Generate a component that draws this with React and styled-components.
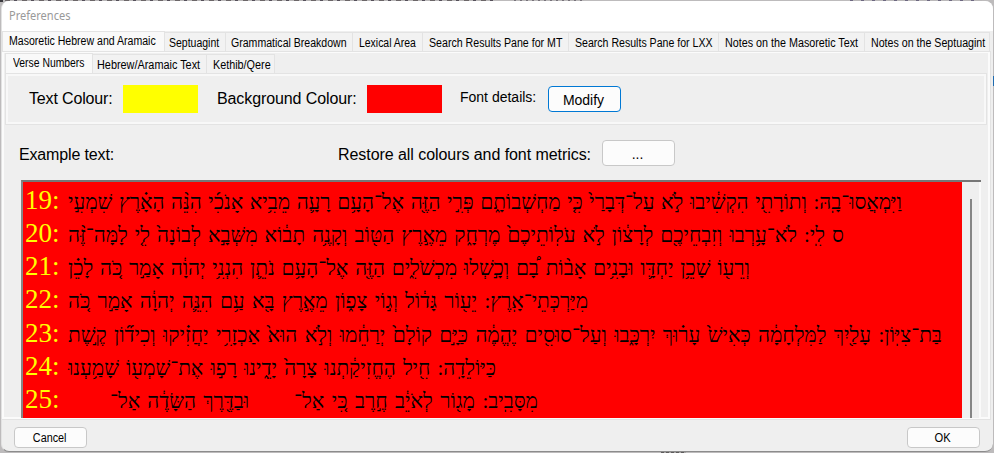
import React from 'react';
import styled, { createGlobalStyle } from 'styled-components';

const GlobalStyle = createGlobalStyle`
  * { box-sizing: border-box; }
  body { margin: 0; overflow: hidden; background: #bdbbbc; }
`;

const Desktop = styled.div`
  width: 994px;
  height: 453px;
  padding: 1px;
  background:
    linear-gradient(#3b3a3f, #3b3a3f) 0 0 / 3px 2px no-repeat,
    repeating-linear-gradient(90deg, #6b6668 0 5px, #b9b7b8 5px 9px, #55505a 9px 12px, #b9b7b8 12px 17px) 5px 0 / 488px 1px no-repeat,
    repeating-linear-gradient(90deg, #77727a 0 2px, #bab8b9 2px 6px) 514px 0 / 70px 1px no-repeat,
    repeating-linear-gradient(90deg, #6d6880 0 3px, #bab8b9 3px 11px) 850px 0 / 132px 1px no-repeat,
    linear-gradient(#1f6bb0, #1f6bb0) 993px 76px / 1px 10px no-repeat,
    repeating-linear-gradient(90deg, #5e5c5c 0 3px, #a5a3a3 3px 5px) 661px 452px / 25px 1px no-repeat,
    #bdbbbc;
`;

const Window = styled.div`
  display: flex;
  flex-direction: column;
  height: 451px;
  border-radius: 8px;
  overflow: hidden;
  background: #efefef;
  border-bottom: 1px solid #8c8c8c;
  border-left: 1px solid #e2e2e2;
  font-family: "Liberation Sans", Arial, sans-serif;
  color: #000;
`;

const TitleBar = styled.div`
  flex: none;
  height: 30px;
  padding: 0 7px;
  background: #fff;
  color: #999;
  font: 12px/29px "Noto Sans", sans-serif;
`;

const TabStrip = styled.div`
  display: flex;
  align-items: flex-end;
  flex: none;
  height: 20px;
`;

const Tab = styled.div`
  flex: none;
  width: ${(p) => p.$width}px;
  height: ${(p) => (p.$active ? 21 : 19)}px;
  padding-left: ${(p) => p.$pad}px;
  margin-bottom: ${(p) => (p.$active ? -1 : 0)}px;
  background: ${(p) => (p.$active ? '#f9f9f9' : '#f2f2f2')};
  border: solid #e3e3e3;
  border-width: 1px 1px 0 ${(p) => (p.$active ? 1 : 0)}px;
  font-size: 12px;
  line-height: ${(p) => (p.$active ? 18 : 20)}px;
  white-space: nowrap;
`;

const Condensed = styled.span`
  display: inline-block;
  transform: scaleX(${(p) => p.$scale});
  transform-origin: ${(p) => p.$origin || 'left'} center;
`;

const TabPage = styled.div`
  display: flex;
  flex-direction: column;
  flex: none;
  width: 989px;
  height: 369px;
  border: solid #e3e3e3;
  border-width: 1px 1px 1px 0;
  box-shadow: inset -2px -2px #fbfbfb, inset 2px 0 #fbfbfb, inset 0 1px #fbfbfb;
  padding: 1px 2px 2px 3px;
`;

const ColourPanel = styled.div`
  display: flex;
  flex: none;
  width: 982px;
  height: 52px;
  border: 1px solid #e3e3e3;
  box-shadow: inset 0 0 0 2px #f8f8f8;
  padding: 11px 0 0 23px;
`;

const Label = styled.div`
  flex: none;
  width: ${(p) => p.$width}px;
  font-size: ${(p) => p.$size || 16}px;
  line-height: ${(p) => p.$line || 27}px;
  letter-spacing: ${(p) => p.$spacing || 0}px;
  white-space: nowrap;
`;

const Swatch = styled.div`
  flex: none;
  width: 75px;
  height: 28px;
  margin-right: ${(p) => p.$gap || 0}px;
  background: ${(p) => p.$colour};
`;

const Button = styled.button`
  display: flex;
  flex: none;
  align-items: center;
  justify-content: center;
  width: 73px;
  height: ${(p) => (p.$small ? 21 : 26)}px;
  margin: ${(p) => p.$offset || 0}px 0 0;
  padding: ${(p) => (p.$small ? 0 : 1)}px 2px 0 0;
  border: 1px solid ${(p) => (p.$focused ? '#0078d4' : '#c8c8c8')};
  border-radius: 4px;
  background: #fcfcfc;
  color: #000;
  font: ${(p) => (p.$small ? 12 : 14)}px "Liberation Sans", Arial, sans-serif;
`;

const RestoreRow = styled.div`
  display: flex;
  flex: none;
  height: 55px;
  padding: 15px 0 0 14px;
`;

const ExampleBox = styled.div`
  display: flex;
  flex: none;
  width: 960px;
  height: 238px;
  margin-left: 16px;
  border: solid #858585;
  border-width: 2px 0 0 2px;
  border-top-color: #777;
`;

const Passage = styled.div`
  flex: none;
  width: 939px;
  height: 236px;
  padding-top: 2px;
  overflow: hidden;
  background: #f00;
`;

const Verse = styled.div`
  display: flex;
  align-items: baseline;
  height: 33.15px;
  line-height: 33px;
  font-family: "Liberation Serif", "Times New Roman", serif;
`;

const VerseNumber = styled.span`
  flex: none;
  width: 44px;
  padding-left: 2px;
  font-size: 27px;
  color: #ff0;
`;

const Words = styled.span`
  display: flex;
  flex: none;
  justify-content: space-between;
  width: ${(p) => p.$width}px;
  margin-left: ${(p) => p.$gap || 0}px;
  font-size: 20.8px;
  white-space: nowrap;
`;

const ScrollTrack = styled.div`
  display: flex;
  flex: 1;
  padding: 17px 0 0 8px;
  background: #efefef;
  border-right: 2px solid #fafafa;
`;

const ScrollThumb = styled.div`
  width: 2px;
  height: 100%;
  background: #858585;
`;

const Footer = styled.div`
  display: flex;
  justify-content: space-between;
  padding: 7px 13px 0 12px;
`;

const MAIN_TABS = [
  ['Masoretic Hebrew and Aramaic', 163, 6, 0.88],
  ['Septuagint', 61, 4, 0.875],
  ['Grammatical Breakdown', 127, 5, 0.88],
  ['Lexical Area', 70, 6, 0.87],
  ['Search Results Pane for MT', 146, 6, 0.885],
  ['Search Results Pane for LXX', 150, 6, 0.881],
  ['Notes on the Masoretic Text', 146, 6, 0.896],
  ['Notes on the Septuagint', 125, 6, 0.887],
];

const SUB_TABS = [
  ['Verse Numbers', 88, 7, 0.864],
  ['Hebrew/Aramaic Text', 114, 4, 0.906],
  ['Kethib/Qere', 68, 6, 0.9],
];

// Each verse holds word groups: [width, left gap, words in left-to-right display order].
const VERSES = [
  ['19:', [[834, 1, 'שִׁמְעִ֣י הָאָ֗רֶץ הִנֵּ֨ה אָנֹכִ֜י מֵבִ֥יא רָעָ֛ה אֶל־הָעָ֥ם הַזֶּ֖ה פְּרִ֣י מַחְשְׁבוֹתָ֑ם כִּ֤י עַל־דְּבָרַי֙ לֹ֣א הִקְשִׁ֔יבוּ וְתוֹרָתִ֖י וַיִּמְאֲסוּ־בָֽהּ:']]],
  ['20:', [[776, 1, 'לָמָּה־זֶּ֨ה לִ֤י לְבוֹנָה֙ מִשְּׁבָ֣א תָב֔וֹא וְקָנֶ֥ה הַטּ֖וֹב מֵאֶ֣רֶץ מֶרְחָ֑ק עֹלֽוֹתֵיכֶם֙ לֹ֣א לְרָצ֔וֹן וְזִבְחֵיכֶ֖ם לֹא־עָ֥רְבוּ לִֽי: ס']]],
  ['21:', [[682, 1, 'לָכֵ֗ן כֹּ֚ה אָמַ֣ר יְהוָ֔ה הִנְנִ֥י נֹתֵ֛ן אֶל־הָעָ֥ם הַזֶּ֖ה מִכְשֹׁלִ֑ים וְכָ֣שְׁלוּ בָ֠ם אָב֨וֹת וּבָנִ֥ים יַחְדָּ֛ו שָׁכֵ֥ן וְרֵע֖וֹ']]],
  ['22:', [[520, 1, 'כֹּ֚ה אָמַ֣ר יְהוָ֔ה הִנֵּ֛ה עַ֥ם בָּ֖א מֵאֶ֣רֶץ צָפ֑וֹן וְג֣וֹי גָּד֔וֹל יֵע֖וֹר מִיַּרְכְּתֵי־אָֽרֶץ:']]],
  ['23:', [[874, 1, 'קֶ֣שֶׁת וְכִיד֞וֹן יַחֲזִ֗יקוּ אַכְזָרִ֥י הוּא֙ וְלֹ֣א יְרַחֵ֔מוּ קוֹלָם֙ כַּיָּ֣ם יֶהֱמֶ֔ה וְעַל־סוּסִ֖ים יִרְכָּ֑בוּ עָר֗וּךְ כְּאִישׁ֙ לַמִּלְחָמָ֔ה עָלַ֖יִךְ בַּת־צִיּֽוֹן:']]],
  ['24:', [[428, 1, 'שָׁמַ֥עְנוּ אֶת־שָׁמְע֖וֹ רָפ֣וּ יָדֵ֑ינוּ צָרָה֙ הֶחֱזִיקַ֔תְנוּ חִ֖יל כַּיּוֹלֵדָֽה:']]],
  ['25:', [[139, 43, 'אַל־ הַשָּׂדֶ֔ה וּבַדֶּ֖רֶךְ'], [244, 45, 'אַל־ כִּ֚י חֶ֣רֶב לְאֹיֵ֔ב מָג֖וֹר מִסָּבִֽיב:']]],
];

function Tabs({ items }) {
  return items.map(([name, width, pad, scale], i) => (
    <Tab key={name} $width={width} $pad={pad} $active={i === 0}>
      <Condensed $scale={scale}>{name}</Condensed>
    </Tab>
  ));
}

export default function App() {
  return (
    <>
      <GlobalStyle />
      <Desktop>
        <Window>
          <TitleBar>
            <Condensed $scale={0.92}>Preferences</Condensed>
          </TitleBar>
          <TabStrip>
            <Tabs items={MAIN_TABS} />
          </TabStrip>
          <TabPage>
            <TabStrip>
              <Tabs items={SUB_TABS} />
            </TabStrip>
            <ColourPanel>
              <Label $width={94} $spacing={-0.15}>Text Colour:</Label>
              <Swatch $colour="#ff0" $gap={19} />
              <Label $width={150} $spacing={-0.1}>Background Colour:</Label>
              <Swatch $colour="#f00" $gap={18} />
              <Label $width={88} $size={14} $line={25}>Font details:</Label>
              <Button $focused $offset={1}>Modify</Button>
            </ColourPanel>
            <RestoreRow>
              <Label $width={319} $line={29} $spacing={-0.15}>Example text:</Label>
              <Label $width={264} $line={29} $spacing={-0.06}>Restore all colours and font metrics:</Label>
              <Button>...</Button>
            </RestoreRow>
            <ExampleBox>
              <Passage>
                {VERSES.map(([number, groups]) => (
                  <Verse key={number}>
                    <VerseNumber>{number}</VerseNumber>
                    {groups.map(([width, gap, text]) => (
                      <Words key={gap} $width={width} $gap={gap} lang="he">
                        {text.split(' ').map((word, i) => (
                          <bdi key={i} dir="rtl">{word}</bdi>
                        ))}
                      </Words>
                    ))}
                  </Verse>
                ))}
              </Passage>
              <ScrollTrack>
                <ScrollThumb />
              </ScrollTrack>
            </ExampleBox>
          </TabPage>
          <Footer>
            <Button $small><Condensed $scale={0.9} $origin="center">Cancel</Condensed></Button>
            <Button $small><Condensed $scale={0.93} $origin="center">OK</Condensed></Button>
          </Footer>
        </Window>
      </Desktop>
    </>
  );
}
